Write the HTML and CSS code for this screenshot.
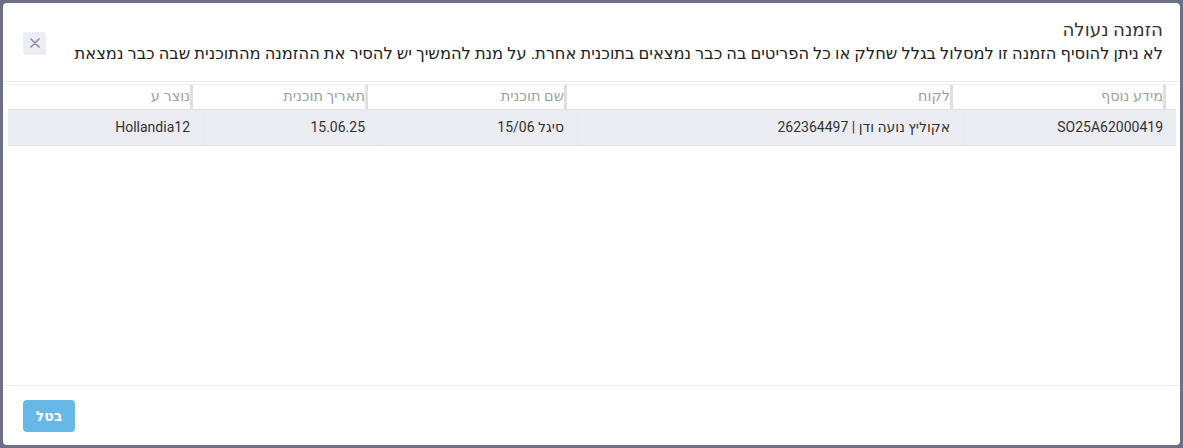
FILE: index.html
```html
<!DOCTYPE html>
<html lang="he" dir="rtl">
<head>
<meta charset="utf-8">
<link rel="stylesheet" href="styles.css">
</head>
<body>
<div class="modal">
  <div class="modal-header">
    <div class="titles">
      <div class="title">הזמנה נעולה</div>
      <div class="subtitle">לא ניתן להוסיף הזמנה זו למסלול בגלל שחלק או כל הפריטים בה כבר נמצאים בתוכנית אחרת. על מנת להמשיך יש להסיר את ההזמנה מהתוכנית שבה כבר נמצאת</div>
    </div>
    <button class="close" aria-label="סגור">
      <svg width="10" height="10" viewBox="0 0 10 10"><path d="M1 1L9 9M9 1L1 9" stroke="#8e9097" stroke-width="1.7" stroke-linecap="round"/></svg>
    </button>
  </div>
  <div class="modal-body">
    <div class="grid">
      <div class="row head">
        <div class="cell c1"><span>מידע נוסף</span></div>
        <div class="cell c2"><span>לקוח</span></div>
        <div class="cell c3"><span>שם תוכנית</span></div>
        <div class="cell c4"><span>תאריך תוכנית</span></div>
        <div class="cell c5"><span>נוצר ע</span></div>
      </div>
      <div class="row data">
        <div class="cell c1">SO25A62000419</div>
        <div class="cell c2">אקוליץ נועה ודן | 262364497</div>
        <div class="cell c3">סיגל 15/06</div>
        <div class="cell c4">15.06.25</div>
        <div class="cell c5">Hollandia12</div>
      </div>
    </div>
  </div>
  <div class="modal-footer">
    <button class="btn">בטל</button>
  </div>
</div>
</body>
</html>
```
FILE: styles.css
```css
html, body {
  margin: 0;
  padding: 0;
  height: 100%;
}
body {
  background: #6d7085;
  font-family: Roboto, "DejaVu Sans", sans-serif;
  color: #333;
  padding: 3px;
  box-sizing: border-box;
}
.modal {
  background: #fff;
  border-radius: 4px;
  height: 442px;
  width: 1177px;
  display: flex;
  flex-direction: column;
  overflow: hidden;
}
.modal-header {
  display: flex;
  align-items: center;
  justify-content: space-between;
  padding: 15px 17px 15px 20px;
  border-bottom: 1px solid #ececef;
}
.titles {
  flex: 1;
}
.title {
  font-size: 18.3px;
  line-height: 24px;
  color: #333;
}
.subtitle {
  font-size: 16.3px;
  line-height: 24px;
  color: #222;
  white-space: nowrap;
}
.close {
  flex: none;
  width: 23px;
  height: 23px;
  border: none;
  border-radius: 3px;
  background: #eceef3;
  padding: 0;
  display: flex;
  align-items: center;
  justify-content: center;
  margin-top: 2px;
}
.modal-body {
  flex: 1;
  padding: 2px 4px 0 5px;
}
.grid {
  border-top: 1px solid #f0f0f2;
}
.row {
  display: flex;
}
.cell {
  box-sizing: border-box;
  padding-right: 10px;
  white-space: nowrap;
}
.c1 { width: 213px; }
.c2 { width: 386px; }
.c3 { width: 199px; }
.c4 { width: 175px; }
.c5 { flex: 1; }
.head {
  height: 24px;
  align-items: center;
}
.head .cell {
  height: 24px;
  display: flex;
}
.head .cell span {
  border-right: 3px solid #dedfe2;
  font-size: 14.5px;
  color: #9e9e9e;
  line-height: 24px;
}
.data {
  height: 37px;
  background: #ebecf1;
  border-top: 1px solid #e2e3e8;
  border-bottom: 1px solid #dfe0e5;
  box-sizing: border-box;
}
.data .cell {
  font-size: 14px;
  line-height: 35px;
  color: #333;
  padding-right: 13px;
  border-left: 1px solid #e8e9ee;
}
.data .c5 { border-left: none; }
.modal-footer {
  border-top: 1px solid #ececef;
  padding: 14px 20px 13px;
  display: flex;
  justify-content: flex-end;
}
.btn {
  background: #67b8e7;
  color: #fff;
  border: none;
  border-radius: 4px;
  height: 32px;
  width: 52px;
  font-family: Roboto, "DejaVu Sans", sans-serif;
  font-size: 14px;
  font-weight: bold;
  padding: 0;
}
```
